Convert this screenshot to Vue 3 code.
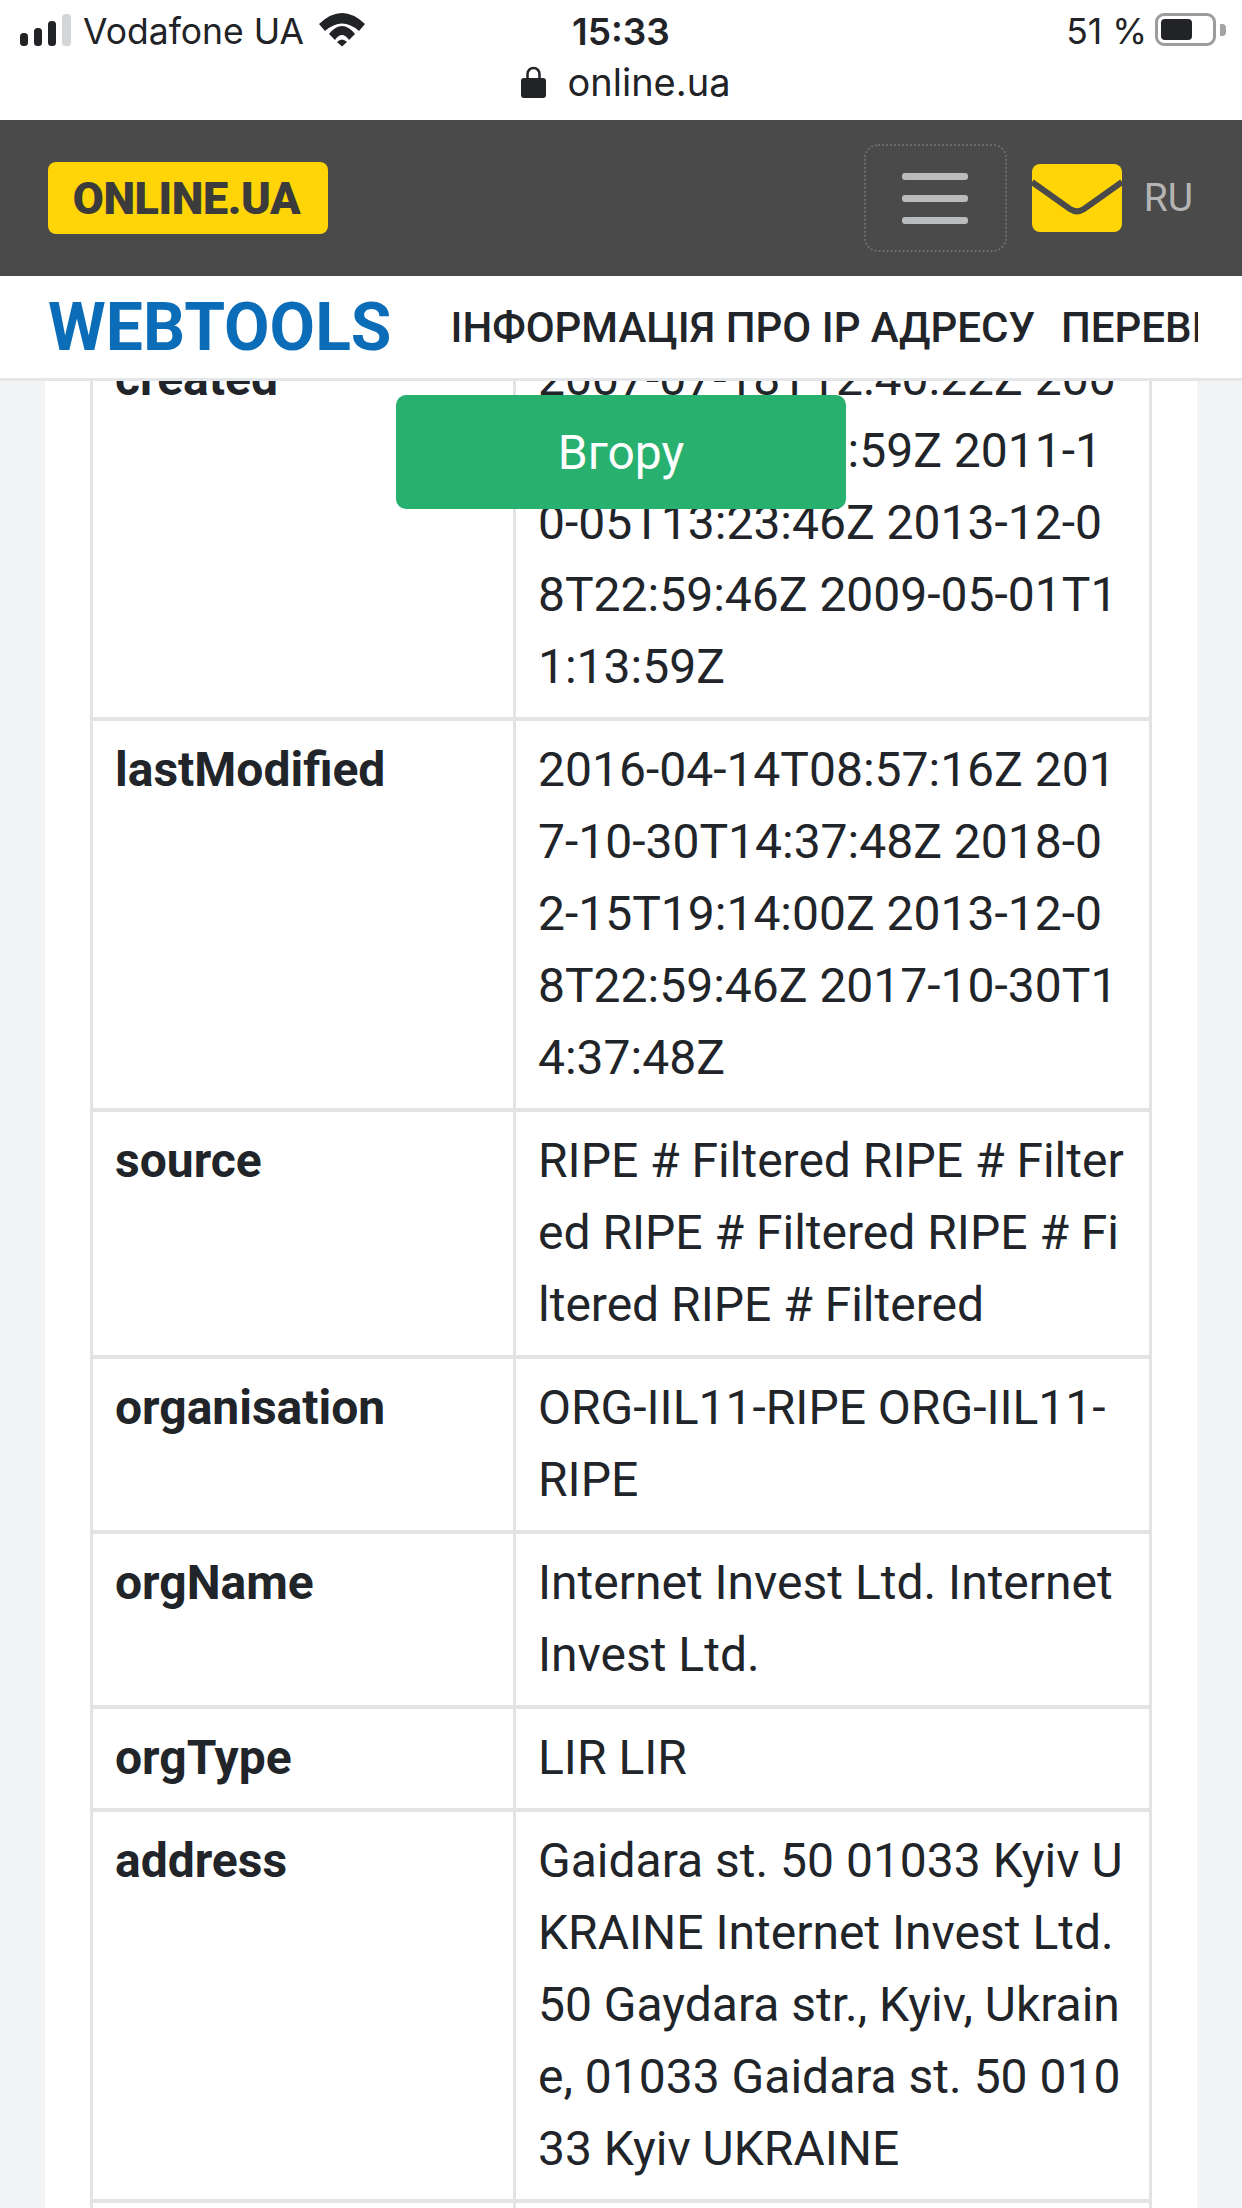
<template>
  <div class="screen">
    <div class="statusbar">
      <div class="status-row">
        <div class="status-left">
          <svg class="signal" width="51" height="33" viewBox="0 0 51 33">
            <rect x="0" y="20" width="8" height="13" rx="3.500" fill="#212326" />
            <rect x="14" y="15" width="8" height="18" rx="3.500" fill="#212326" />
            <rect x="28" y="8" width="8" height="25" rx="3.500" fill="#212326" />
            <rect x="42" y="1" width="9" height="32" rx="3.500" fill="#d3d5d7" />
          </svg>
          <span class="carrier">Vodafone UA</span>
          <svg class="wifi" width="46" height="34" viewBox="0 0 46 34">
            <path d="M0 11Q23-11 46 11L40 18Q23 3 6 18z" fill="#212326" />
            <path d="M10 21Q23 5 36 21L30 27Q23 17 16 27z" fill="#212326" />
            <path d="M18 29Q23 24 28 29L23 33.500z" fill="#212326" />
          </svg>
        </div>
        <div class="clock">15:33</div>
        <div class="status-right">
          <span class="percent">51 %</span>
          <div class="battery"><div class="battery-fill"></div></div>
          <div class="battery-tip"></div>
        </div>
      </div>
      <div class="address">
        <svg width="25" height="32" viewBox="0 0 25 32">
          <path d="M6.500 14V8a6 6 0 0 1 12 0v6" fill="none" stroke="#212326" stroke-width="2.500" />
          <rect x="0" y="12" width="25" height="20" rx="3" fill="#212326" />
        </svg>
        <span>online.ua</span>
      </div>
    </div>

    <header class="topbar">
      <div class="logo">ONLINE.UA</div>
      <div class="topbar-right">
        <button class="burger" type="button">
          <span></span>
          <span></span>
          <span></span>
        </button>
        <svg class="mail" width="90" height="68" viewBox="0 0 90 68">
          <rect width="90" height="68" rx="8" fill="#ffd507" />
          <path d="M0 18l38 27c4.500 3 9.500 3 14 0l38-27" fill="none" stroke="#4a4a4a" stroke-width="6" />
        </svg>
        <span class="lang">RU</span>
      </div>
    </header>

    <nav class="navbar">
      <div class="brand">WEBTOOLS</div>
      <div class="nav-links">
        <a>ІНФОРМАЦІЯ ПРО IP АДРЕСУ</a>
        <a>ПЕРЕВІРКА САЙТУ</a>
      </div>
    </nav>

    <main class="page">
      <div class="card">
        <table class="whois">
          <tbody>
            <tr v-for="row in rows" :key="row.name">
              <th>{{ row.name }}</th>
              <td>{{ row.value }}</td>
            </tr>
          </tbody>
        </table>
      </div>
      <button class="to-top" type="button">Вгору</button>
    </main>
  </div>
</template>

<script setup>
const rows = [
  {
    name: 'created',
    value: '2007-07-18T12:40:22Z 2009-05-01T11:13:59Z 2011-10-05T13:23:46Z 2013-12-08T22:59:46Z 2009-05-01T11:13:59Z',
  },
  {
    name: 'lastModified',
    value: '2016-04-14T08:57:16Z 2017-10-30T14:37:48Z 2018-02-15T19:14:00Z 2013-12-08T22:59:46Z 2017-10-30T14:37:48Z',
  },
  { name: 'source', value: 'RIPE # Filtered RIPE # Filtered RIPE # Filtered RIPE # Filtered RIPE # Filtered' },
  { name: 'organisation', value: 'ORG-IIL11-RIPE ORG-IIL11-RIPE' },
  { name: 'orgName', value: 'Internet Invest Ltd. Internet Invest Ltd.' },
  { name: 'orgType', value: 'LIR LIR' },
  {
    name: 'address',
    value: 'Gaidara st. 50 01033 Kyiv UKRAINE Internet Invest Ltd. 50 Gaydara str., Kyiv, Ukraine, 01033 Gaidara st. 50 01033 Kyiv UKRAINE',
  },
  { name: 'phone', value: '+380 44 000 00 00' },
]
</script>

<style>
html,
body {
  margin: 0;
  background: #f3f4f6;
}
</style>

<style scoped>
.screen {
  width: 1242px;
  height: 2208px;
  overflow: hidden;
  display: flex;
  flex-direction: column;
  font-family: Roboto, 'Liberation Sans', sans-serif;
  color: #212529;
}
.statusbar {
  height: 120px;
  box-sizing: border-box;
  padding: 13px 16px 0 20px;
  background: #fff;
  flex-shrink: 0;
  color: #212326;
}
.status-row {
  display: grid;
  grid-template-columns: 1fr auto 1fr;
  grid-template-rows: 33px;
  align-items: center;
  font-family: Inter, 'Liberation Sans', sans-serif;
  font-size: 35.500px;
}
.status-left {
  display: flex;
  align-items: center;
}
.carrier {
  margin-left: 12px;
  padding-top: 3px;
}
.wifi {
  margin-left: 15px;
}
.clock {
  padding-top: 3px;
  font-size: 37px;
  font-weight: 600;
  transform: translateX(-2px);
}
.status-right {
  display: flex;
  align-items: center;
  justify-content: flex-end;
}
.percent {
  margin-right: 8px;
  padding-top: 3px;
}
.battery {
  width: 61px;
  height: 33px;
  box-sizing: border-box;
  border: 3px solid #9b9c9e;
  border-radius: 9px;
  padding: 3px;
}
.battery-fill {
  width: 31px;
  height: 100%;
  background: #212326;
  border-radius: 4px;
}
.battery-tip {
  width: 6px;
  height: 12px;
  margin-left: 4px;
  background: #a3a4a6;
  border-radius: 0 4px 4px 0;
}
.address {
  display: flex;
  align-items: center;
  justify-content: center;
  gap: 21px;
  margin-top: 20px;
  padding-left: 6px;
  font-family: Inter, 'Liberation Sans', sans-serif;
  font-size: 38px;
  height: 32px;
}
.topbar {
  height: 156px;
  box-sizing: border-box;
  flex-shrink: 0;
  display: flex;
  align-items: center;
  justify-content: space-between;
  padding: 0 49px 0 48px;
  background: #4a4a4a;
}
.logo {
  width: 280px;
  height: 72px;
  box-sizing: border-box;
  padding-right: 3px;
  display: flex;
  align-items: center;
  justify-content: center;
  background: #ffd507;
  border-radius: 8px;
  color: #3b3b3b;
  font-size: 45px;
  font-weight: 900;
  letter-spacing: -0.4px;
}
.topbar-right {
  display: flex;
  align-items: center;
}
.burger {
  width: 143px;
  height: 108px;
  display: flex;
  flex-direction: column;
  align-items: center;
  justify-content: center;
  gap: 15px;
  padding: 0;
  margin-right: 25px;
  background: transparent;
  border: 2px dotted #6c6c6c;
  border-radius: 14px;
}
.burger span {
  width: 66px;
  height: 7px;
  background: #b9bbbc;
  border-radius: 3px;
}
.lang {
  margin-left: 22px;
  color: #b4b4b4;
  font-size: 39px;
}
.navbar {
  height: 105px;
  box-sizing: border-box;
  flex-shrink: 0;
  display: flex;
  align-items: center;
  padding: 0 44px 0 48px;
  background: #fff;
  border-bottom: 3px solid #e4e6e8;
}
.brand {
  flex-shrink: 0;
  color: #0b6cb8;
  font-size: 66px;
  font-weight: 700;
  margin-right: 59px;
}
.nav-links {
  display: flex;
  gap: 26px;
  overflow: hidden;
  white-space: nowrap;
  font-size: 42px;
  font-weight: 500;
}
.page {
  position: relative;
  flex: 1;
  overflow: hidden;
  padding: 0 45px;
}
.card {
  display: flow-root;
  background: #fff;
  height: 100%;
  padding: 0 45px;
}
.whois {
  width: 100%;
  margin-top: -55px;
  table-layout: fixed;
  border-collapse: collapse;
  font-size: 48px;
  line-height: 72px;
}
.whois th,
.whois td {
  box-sizing: border-box;
  padding: 13px 22px 14px;
  border-style: solid;
  border-color: #e1e3e5;
  border-width: 4px 3px;
  vertical-align: top;
  text-align: left;
  word-break: break-all;
}
.whois th {
  width: 423px;
  font-weight: 700;
}
.whois td {
  font-weight: 400;
}
.to-top {
  position: absolute;
  top: 14px;
  left: 396px;
  width: 450px;
  height: 114px;
  background: #27b06e;
  border: 0;
  border-radius: 10px;
  color: #fff;
  font-family: Roboto, sans-serif;
  font-size: 48px;
}
</style>
